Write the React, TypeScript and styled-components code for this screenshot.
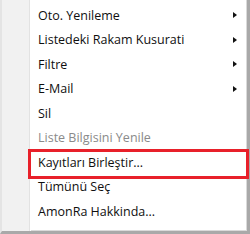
import React from "react";
import styled, { createGlobalStyle } from "styled-components";

const GlobalStyle = createGlobalStyle`
  html, body {
    margin: 0;
    padding: 0;
    background: #ffffff;
  }
  body {
    font-family: "Open Sans", "Noto Sans", sans-serif;
  }
`;

const Menu = styled.div`
  position: relative;
  display: flex;
  width: 250px;
  height: 234px;
  box-sizing: border-box;
  background: #ffffff;
  border-right: 3px solid #a9a9a9;
  border-bottom: 3px solid #a9a9a9;
  box-shadow: inset -1px -1px 0 #dadada;
  border-left: 2px solid #e4e4e4;
`;

const Gutter = styled.div`
  width: 27px;
  flex-shrink: 0;
  background: #f1f1f1;
  border-right: 1px solid #e2e2e2;
  box-shadow: 1px 0 0 #ffffff;
`;

const List = styled.div`
  flex: 1;
  display: flex;
  flex-direction: column;
  padding-top: 3px;
`;

const Row = styled.div<{ $disabled?: boolean }>`
  position: relative;
  display: flex;
  align-items: center;
  justify-content: space-between;
  height: 24.5px;
  padding-left: 8px;
  padding-right: 10px;
  font-size: 12.5px;
  color: ${(p) => (p.$disabled ? "#8a8a8a" : "#0f0f0f")};
  white-space: nowrap;
`;

const Mark = styled.div`
  position: absolute;
  left: -2px;
  right: -2px;
  top: -1px;
  bottom: -4px;
  border: 3px solid #e8202a;
  pointer-events: none;
`;

const Arrow = styled.span`
  width: 0;
  height: 0;
  border-top: 3.5px solid transparent;
  border-bottom: 3.5px solid transparent;
  border-left: 4px solid #111111;
`;

type Item = {
  label: string;
  sub?: boolean;
  disabled?: boolean;
  marked?: boolean;
};

const items: Item[] = [
  { label: "Oto. Yenileme", sub: true },
  { label: "Listedeki Rakam Kusurati", sub: true },
  { label: "Filtre", sub: true },
  { label: "E-Mail", sub: true },
  { label: "Sil" },
  { label: "Liste Bilgisini Yenile", disabled: true },
  { label: "Kayıtları Birleştir...", marked: true },
  { label: "Tümünü Seç" },
  { label: "AmonRa Hakkinda..." },
];

export default function App() {
  return (
    <>
      <GlobalStyle />
      <Menu>
        <Gutter />
        <List>
          {items.map((it) => (
            <Row key={it.label} $disabled={it.disabled}>
              <span>{it.label}</span>
              {it.sub && <Arrow />}
              {it.marked && <Mark />}
            </Row>
          ))}
        </List>
      </Menu>
    </>
  );
}
